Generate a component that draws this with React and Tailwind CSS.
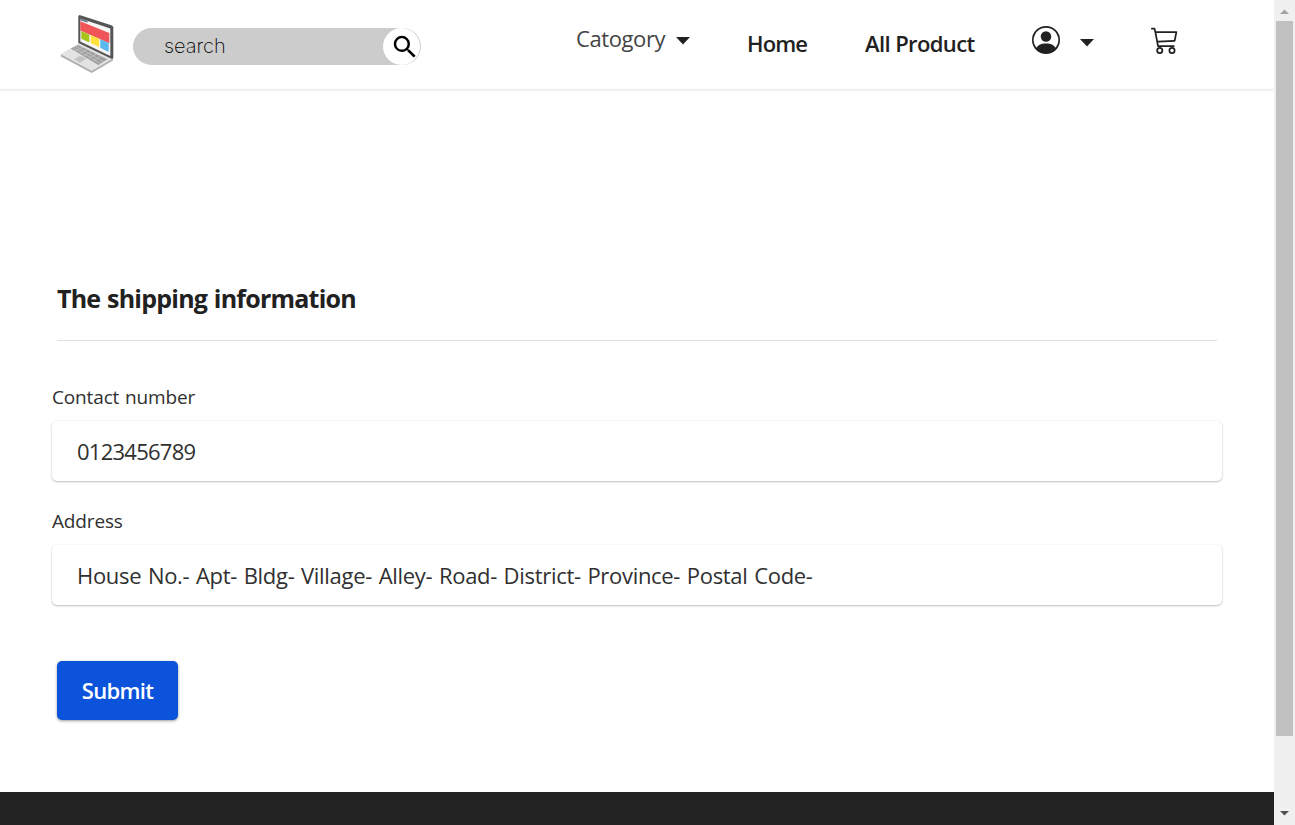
import React from 'react';
import { BsCart3, BsPersonCircle } from 'react-icons/bs';
import { MdSearch } from 'react-icons/md';

function Caret() {
  return (
    <svg className="block h-[8px] w-[14px]" viewBox="0 0 14 8" fill="#212121">
      <path d="M0 0H14L7 7.4Z" />
    </svg>
  );
}

function Laptop() {
  return (
    <svg className="block h-[60px] w-[56px]" viewBox="0 0 56 60">
      <path d="M.8 40 31.700 56.500 53 44V46.500L31.700 59 .8 42.500Z" fill="#b0b0b0" />
      <path d="M.8 40 18.500 29.500 53 44.500 31.700 56.800Z" fill="#e3e3e3" />
      <path d="M10.700 34.500 18.300 31 47.300 45.300 38.300 51Z" fill="#a0a0a0" />
      <path d="M13 33.500 40.500 49.500M15.500 32.300 43.500 47.700M15 36.800 23 33.200M19.500 39.200 27.500 35.500M24 41.700 32 37.700M28.500 44.300 36.500 40M33 47 41 42.200" stroke="#ccc" strokeWidth=".6" />
      <path d="M14 45.300 20 41.700 26.700 44.500 20 48.700Z" fill="#c3c3c3" />
      <path d="M18.300 2 19.500 1 52 11.500 53.300 13V44L52 45 18.300 29Z" fill="#555" />
      <path d="M20.300 4.500 50.300 14.500V42L20.300 27.500Z" fill="#f7f7f7" />
      <path d="M20.300 4.500 27.500 7V8.800L20.300 6.300Z" fill="#65758b" />
      <path d="M20.300 7.300 49.300 19V29.300L20.300 16.500Z" fill="#f05559" />
      <path d="M21.300 17 29.300 20.500V28.500L21.300 24.700Z" fill="#a8c51e" />
      <path d="M30.700 21 39.200 24.700V33L30.700 29Z" fill="#ffe23e" />
      <path d="M40.300 25.300 48.700 29V38L40.300 33.700Z" fill="#5ab8ed" />
    </svg>
  );
}

function Header() {
  return (
    <header className="flex h-[89px] shrink-0 items-start bg-white shadow-[0_1px_3px_rgba(0,0,0,0.12)]">
      <div className="ml-[60px] mt-[14px] w-[56px]"><Laptop /></div>
      <div className="ml-[17px] mt-[28px] flex h-[37px] w-[288px] items-center justify-between rounded-full bg-[#ccc] pl-[31px]">
        <span className="font-['Inter'] text-[20px] leading-[37px] font-[250] tracking-[0px] text-black">search</span>
        <span className="mr-px flex h-[37px] w-[37px] items-center justify-end rounded-full bg-white">
          <MdSearch className="size-[30px] text-black" />
        </span>
      </div>
      <nav className="flex items-start text-[22px] leading-[30px] whitespace-nowrap text-[#212121]">
        <div className="ml-[155px] mt-[23px] flex w-[114px] items-center justify-between">
          <span className="w-[100px] tracking-[-0.4px] text-[#444]">Catogory</span>
          <span className="pt-[5px]"><Caret /></span>
        </div>
        <span className="ml-[57px] mt-[28px] w-[60px] font-semibold tracking-[-0.9px]">Home</span>
        <span className="ml-[58px] mt-[28px] w-[111px] font-semibold tracking-[-0.6px]">All Product</span>
        <BsPersonCircle className="ml-[56px] mt-[26px] size-[28px]" />
        <span className="ml-[20px] mt-[39px]"><Caret /></span>
        <BsCart3 className="ml-[57px] mt-[26px] size-[28px]" />
      </nav>
    </header>
  );
}

function Field({ label, value, tracking }) {
  return (
    <label className="block h-[124px] px-[52px] text-[#303030]">
      <span className="block h-[37px] text-[19px] leading-[26px] tracking-[-0.15px] [word-spacing:1px]">{label}</span>
      <span className={`flex h-[60px] items-center rounded-[5px] bg-white px-[25px] text-[22px] shadow-[0_1px_2px_rgba(0,0,0,0.24),0_0_2px_rgba(0,0,0,0.08)] ${tracking}`}>
        <span className="leading-[30px] whitespace-nowrap">{value}</span>
      </span>
    </label>
  );
}

export default function App() {
  return (
    <div className="flex h-[825px] w-[1295px] overflow-hidden bg-white font-['Open_Sans',sans-serif]">
      <div className="flex w-[1274px] flex-col">
        <Header />
        <main className="flex h-[703px] shrink-0 flex-col">
          <h1 className="mx-[57px] mt-[192px] h-[60px] border-b border-[#dedede] text-[25px] leading-[34px] font-bold tracking-[-0.78px] [word-spacing:1px] text-[#212121]">The shipping information</h1>
          <div className="mt-[43px]">
            <Field label="Contact number" value="0123456789" tracking="tracking-[-0.75px]" />
            <Field label="Address" value="House No.- Apt- Bldg- Village- Alley- Road- District- Province- Postal Code-" tracking="tracking-[-0.3px] [word-spacing:1.2px]" />
          </div>
          <button className="ml-[57px] mt-[29px] h-[59px] w-[121px] rounded-[5px] bg-[#0b53da] text-[22px] font-semibold tracking-[-0.7px] text-white shadow-[0_1px_3px_rgba(0,0,0,0.4)]">Submit</button>
        </main>
        <footer className="h-[33px] bg-[#222]" />
      </div>
      <div className="flex w-[21px] flex-col items-center bg-[#f0f0f0]">
        <svg className="block h-[21px] w-[21px] shrink-0" viewBox="0 0 21 21"><path d="M6 14 10.500 9.500 15 14Z" fill="#a3a3a3" /></svg>
        <div className="h-[715px] w-[17px] bg-[#c0c0c0]" />
        <svg className="mt-auto block h-[21px] w-[21px] shrink-0" viewBox="0 0 21 21"><path d="M6 7H15L10.500 11.500Z" fill="#505050" /></svg>
      </div>
    </div>
  );
}
